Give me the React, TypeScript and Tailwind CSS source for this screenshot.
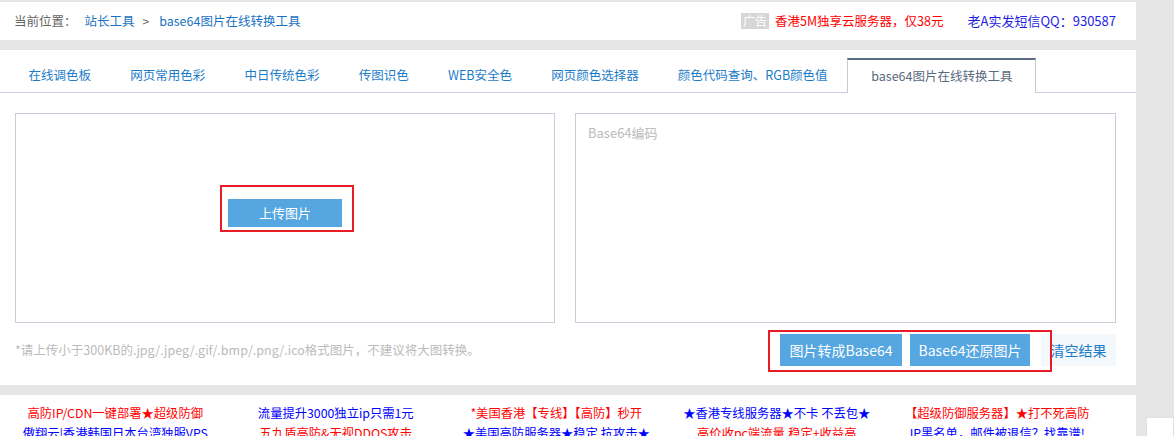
import React from "react";

const tabs = [
  "在线调色板",
  "网页常用色彩",
  "中日传统色彩",
  "传图识色",
  "WEB安全色",
  "网页颜色选择器",
  "颜色代码查询、RGB颜色值",
];

const ads: { t: string; c: string }[][] = [
  [
    { t: "高防IP/CDN一键部署★超级防御", c: "text-[#ff0000]" },
    { t: "傲翔云|香港韩国日本台湾独服VPS", c: "text-[#0000ff]" },
  ],
  [
    { t: "流量提升3000独立ip只需1元", c: "text-[#0000ff]" },
    { t: "五九盾高防&无视DDOS攻击", c: "text-[#ff0000]" },
  ],
  [
    { t: "*美国香港【专线】【高防】秒开", c: "text-[#ff0000]" },
    { t: "★美国高防服务器★稳定 抗攻击★", c: "text-[#0000ff]" },
  ],
  [
    { t: "★香港专线服务器★不卡 不丢包★", c: "text-[#0000ff]" },
    { t: "高价收pc端流量,稳定+收益高", c: "text-[#ff0000]" },
  ],
  [
    { t: "【超级防御服务器】★打不死高防", c: "text-[#ff0000]" },
    { t: "IP黑名单，邮件被退信？找靠谱!", c: "text-[#0000ff]" },
  ],
];

export default function App() {
  return (
    <div className="relative w-[1174px] h-[436px] overflow-hidden bg-[#e6e6e6] font-[family-name:'Noto_Sans_CJK_SC',sans-serif] text-[12.5px]">
      <div className="w-[1136px] pt-[2px]">
        {/* top bar */}
        <div className="h-[38px] bg-white flex items-center justify-between pl-[14px] pr-[20px]">
          <div className="flex items-center">
            <span className="text-[#666]">当前位置：</span>
            <span className="ml-[8px] text-[#1a73c2]">站长工具</span>
            <span className="ml-[8px] text-[#666] text-[12px]">&gt;</span>
            <span className="ml-[10px] text-[#1a73c2]">base64图片在线转换工具</span>
          </div>
          <div className="flex items-center text-[13px]">
            <span className="bg-[#d6d6d6] text-white px-[2px] leading-[16px] text-[12px]">广告</span>
            <span className="ml-[6px] text-[#ff0000] text-[12.5px]">香港5M独享云服务器，仅38元</span>
            <span className="ml-[24px] text-[#1e1ee0]">老A实发短信QQ：930587</span>
          </div>
        </div>

        {/* main panel */}
        <div className="mt-[10px] bg-white pt-[9px] pb-[19px]">
          <div className="flex items-end border-b border-[#c8d0db] pl-[9px] h-[34px]">
            {tabs.map((t) => (
              <div key={t} className="px-[19.6px] h-[34px] flex items-center text-[#1c7cc8]">
                {t}
              </div>
            ))}
            <div className="-mb-px h-[35px] px-[23px] flex items-center bg-white border-x border-[#c3ccd8] border-t-2 border-t-[#5b6a85] text-[#5a6a80]">
              base64图片在线转换工具
            </div>
          </div>

          <div className="flex gap-[20px] pl-[15px] pr-[20px] pt-[20px]">
            <div className="w-[541px] h-[210px] border border-[#c5ced9] flex justify-center pt-[85px]">
              <div className="relative h-[28px]">
                <div className="w-[114px] h-[28px] bg-[#56a6e1] text-white text-[13px] flex items-center justify-center">
                  上传图片
                </div>
                <div className="absolute left-[-8px] top-[-14px] w-[134px] h-[47px] border-2 border-[#e81c24]" />
              </div>
            </div>
            <div className="w-[542px] h-[210px] border border-[#c5ced9] px-[12px] pt-[9px] text-[13px] text-[#bbbbbb]">
              Base64编码
            </div>
          </div>

          <div className="flex items-center justify-between pl-[15px] pr-[20px] mt-[11px]">
            <span className="text-[#bbbbbb] text-[12.5px]">
              *请上传小于300KB的.jpg/.jpeg/.gif/.bmp/.png/.ico格式图片，不建议将大图转换。
            </span>
            <div className="relative flex items-center">
              <div className="w-[122px] h-[32px] bg-[#56a6e1] text-white text-[14px] flex items-center justify-center">
                图片转成Base64
              </div>
              <div className="ml-[8px] w-[120px] h-[32px] bg-[#56a6e1] text-white text-[14px] flex items-center justify-center">
                Base64还原图片
              </div>
              <div className="ml-[11px] w-[75px] h-[32px] bg-[#f3f8fc] text-[#1c7cc8] text-[14px] flex items-center justify-center">
                清空结果
              </div>
              <div className="absolute left-[-12px] top-[-4px] w-[284px] h-[42px] border-2 border-[#e81c24]" />
            </div>
          </div>
        </div>

        {/* ads */}
        <div className="mt-[10px] bg-white h-[60px] pl-[5px] pt-[8px] grid grid-cols-[repeat(5,220.5px)] leading-[20px] text-[12.3px]">
          {ads.map((col, i) => (
            <div key={i} className="flex flex-col items-center">
              {col.map((a) => (
                <span key={a.t} className={`${a.c} whitespace-nowrap`}>
                  {a.t}
                </span>
              ))}
            </div>
          ))}
        </div>
      </div>
      <div className="absolute right-0 top-[417px] w-[28px] h-[30px] bg-white border border-[#e0e0e0]" />
    </div>
  );
}
